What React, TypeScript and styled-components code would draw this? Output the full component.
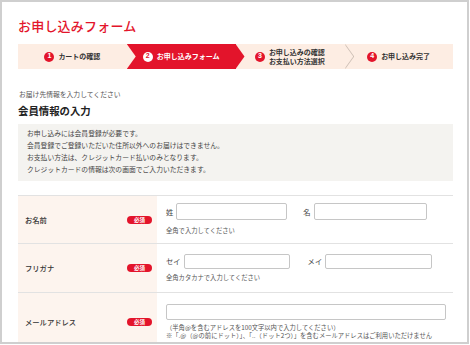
import React from 'react'
import styled, { createGlobalStyle } from 'styled-components'

const RED = '#e3142b'
const PEACH = '#fdede3'

const GlobalStyle = createGlobalStyle`
  html, body {
    margin: 0;
    padding: 0;
    background: #fff;
    overflow: hidden;
  }
  body {
    font-family: "Noto Sans CJK JP", "Noto Sans", sans-serif;
    color: #333;
  }
`

const Frame = styled.div`
  box-sizing: border-box;
  width: 469px;
  height: 344px;
  border: 2px solid #cfcfcf;
  overflow: hidden;
  padding: 17px 14px 0 16px;
`

const Title = styled.h1`
  margin: 0;
  font-size: 13px;
  line-height: 13px;
  font-weight: 500;
  color: ${RED};
  letter-spacing: 0.2px;
`

const Steps = styled.ol`
  display: flex;
  height: 25px;
  margin: 12px 0 0;
  padding: 0;
  list-style: none;
`

const Step = styled.li<{ $active?: boolean; $arrow?: boolean; $line?: boolean }>`
  flex: 1;
  position: relative;
  display: flex;
  align-items: center;
  justify-content: center;
  gap: 4px;
  background: ${(p) => (p.$active ? RED : PEACH)};
  color: ${(p) => (p.$active ? '#fff' : '#333')};
  font-size: 7px;
  line-height: 8.5px;
  font-weight: 700;

  &::before {
    content: '';
    display: ${(p) => (p.$arrow && p.$line ? 'block' : 'none')};
    position: absolute;
    top: 0;
    right: -10px;
    width: 9px;
    height: 100%;
    background: #cdbfb5;
    clip-path: polygon(0 0, 100% 50%, 0 100%);
    z-index: 1;
  }

  &::after {
    content: '';
    display: ${(p) => (p.$arrow ? 'block' : 'none')};
    position: absolute;
    top: 0;
    right: -9px;
    width: 9px;
    height: 100%;
    background: ${(p) => (p.$active ? RED : PEACH)};
    clip-path: polygon(0 0, 100% 50%, 0 100%);
    z-index: 2;
  }
`

const Num = styled.span<{ $active?: boolean }>`
  flex: none;
  width: 10px;
  height: 10px;
  border-radius: 50%;
  background: ${(p) => (p.$active ? '#fff' : RED)};
  color: ${(p) => (p.$active ? RED : '#fff')};
  font-family: "Liberation Sans", sans-serif;
  font-size: 7px;
  font-weight: 700;
  display: flex;
  align-items: center;
  justify-content: center;
`

const Lead = styled.p`
  margin: 20px 0 0 1px;
  font-size: 6.8px;
  line-height: 10px;
  color: #555;
`

const Heading = styled.h2`
  margin: 5px 0 0;
  font-size: 10.4px;
  line-height: 14px;
  font-weight: 700;
  color: #222;
`

const Notice = styled.div`
  margin-top: 6px;
  padding: 3px 10px 6px 9px;
  background: #f4f3f0;
  font-size: 6.8px;
  line-height: 12px;
  color: #444;
`

const Table = styled.div`
  margin-top: 14px;
  border-top: 1px solid #e2e2e2;
`

const Row = styled.div<{ $h: number }>`
  display: grid;
  grid-template-columns: 139px 1fr;
  min-height: ${(p) => p.$h}px;
  border-bottom: 1px solid #e2e2e2;
`

const LabelCell = styled.div`
  display: flex;
  align-items: center;
  justify-content: space-between;
  padding: 0 5px 0 7px;
  background: #fdf4ee;
  font-size: 7.3px;
  font-weight: 500;
  color: #333;
`

const Badge = styled.span`
  width: 25px;
  height: 8px;
  border-radius: 4px;
  background: ${RED};
  color: #fff;
  font-size: 5.5px;
  line-height: 8px;
  font-weight: 700;
  text-align: center;
`

const FieldCell = styled.div`
  display: flex;
  flex-direction: column;
  justify-content: center;
  padding: 0 8px 0 9px;
`

const InputLine = styled.div`
  display: flex;
  align-items: center;
`

const Caption = styled.span<{ $gap?: number }>`
  margin-left: ${(p) => p.$gap ?? 0}px;
  margin-right: 3px;
  font-size: 7.3px;
  color: #444;
`

const Input = styled.input<{ $w: number; $h?: number }>`
  box-sizing: border-box;
  width: ${(p) => p.$w}px;
  height: ${(p) => p.$h ?? 16}px;
  margin: 0;
  padding: 0 4px;
  border: 1px solid #c6c6c6;
  border-radius: 2px;
  background: #fff;
  outline: none;
`

const Help = styled.p<{ $top?: number }>`
  margin: ${(p) => p.$top ?? 7}px 0 0;
  font-size: 6.3px;
  line-height: 8.3px;
  color: #555;
  white-space: nowrap;
`

export default function App() {
  return (
    <>
      <GlobalStyle />
      <Frame>
        <Title>お申し込みフォーム</Title>
        <Steps>
          <Step $arrow>
            <Num>1</Num>
            <span>カートの確認</span>
          </Step>
          <Step $active $arrow>
            <Num $active>2</Num>
            <span>お申し込みフォーム</span>
          </Step>
          <Step $arrow $line>
            <Num>3</Num>
            <span>
              お申し込みの確認
              <br />
              お支払い方法選択
            </span>
          </Step>
          <Step>
            <Num>4</Num>
            <span>お申し込み完了</span>
          </Step>
        </Steps>

        <Lead>お届け先情報を入力してください</Lead>
        <Heading>会員情報の入力</Heading>
        <Notice>
          お申し込みには会員登録が必要です。
          <br />
          会員登録でご登録いただいた住所以外へのお届けはできません。
          <br />
          お支払い方法は、クレジットカード払いのみとなります。
          <br />
          クレジットカードの情報は次の画面でご入力いただきます。
        </Notice>

        <Table>
          <Row $h={47}>
            <LabelCell>
              お名前
              <Badge>必須</Badge>
            </LabelCell>
            <FieldCell>
              <InputLine>
                <Caption>姓</Caption>
                <Input $w={111} $h={17} />
                <Caption $gap={16}>名</Caption>
                <Input $w={113} $h={17} />
              </InputLine>
              <Help>全角で入力してください</Help>
            </FieldCell>
          </Row>
          <Row $h={48}>
            <LabelCell>
              フリガナ
              <Badge>必須</Badge>
            </LabelCell>
            <FieldCell>
              <InputLine>
                <Caption>セイ</Caption>
                <Input $w={106} $h={15} />
                <Caption $gap={18}>メイ</Caption>
                <Input $w={107} $h={15} />
              </InputLine>
              <Help $top={5}>全角カタカナで入力してください</Help>
            </FieldCell>
          </Row>
          <Row $h={58}>
            <LabelCell>
              メールアドレス
              <Badge>必須</Badge>
            </LabelCell>
            <FieldCell>
              <Input $w={280} $h={16} />
              <Help $top={4}>
                （半角@を含むアドレスを100文字以内で入力してください）
                <br />
                ※「.@（@の前にドット）」、「..（ドット2つ）」を含むメールアドレスはご利用いただけません
              </Help>
            </FieldCell>
          </Row>
        </Table>
      </Frame>
    </>
  )
}
